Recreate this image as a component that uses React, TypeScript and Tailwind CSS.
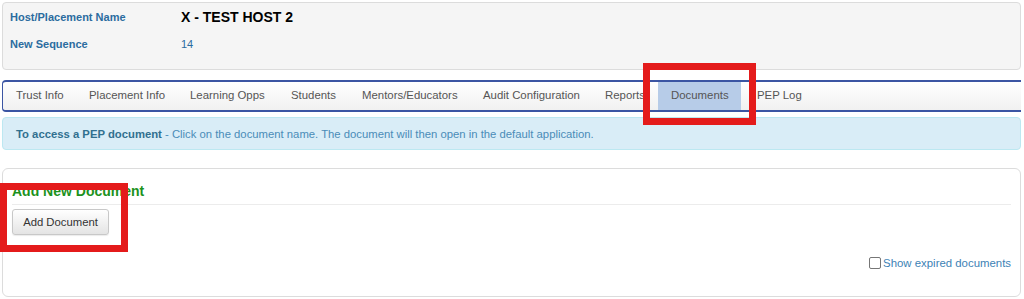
const tabs = [
  { label: 'Trust Info', w: 'w-[73px]' },
  { label: 'Placement Info', w: 'w-[101px]' },
  { label: 'Learning Opps', w: 'w-[101px]' },
  { label: 'Students', w: 'w-[71px]' },
  { label: 'Mentors/Educators', w: 'w-[121px]' },
  { label: 'Audit Configuration', w: 'w-[122px]' },
  { label: 'Reports', w: 'w-[64px]' },
];

export default function App() {
  return (
    <div className="relative h-[299px] w-[1024px] overflow-hidden bg-white pl-[2px] pr-[3px] pt-[2px] font-['Liberation_Sans',Arial,sans-serif]">
      {/* header summary */}
      <div className="h-[68px] rounded-[4px] border border-[#dcdcdc] bg-[#f5f5f5] pl-[7px] pt-[5px]">
        <div className="flex h-[18px] items-center">
          <span className="w-[171px] text-[11px] font-bold text-[#2b6c9f]">Host/Placement Name</span>
          <span className="text-[14px] font-bold text-black">X - TEST HOST 2</span>
        </div>
        <div className="mt-[9px] flex h-[18px] items-center">
          <span className="w-[171px] text-[11px] font-bold text-[#2b6c9f]">New Sequence</span>
          <span className="text-[11px] text-[#2b6c9f]">14</span>
        </div>
      </div>

      {/* tab bar */}
      <div className="mt-[10px] flex h-[32px] rounded-l-[4px] border-y-2 border-l border-[#3b55a3] bg-gradient-to-b from-white to-[#f1f1f1] pl-[2px]">
        {tabs.map((t) => (
          <div key={t.label} className={`${t.w} flex items-center pl-[11px] text-[11.4px] text-[#555]`}>
            {t.label}
          </div>
        ))}
        <div className="flex w-[83px] items-center bg-[#b7cce8] pl-[13px] text-[11.4px] text-[#555]">Documents</div>
        <div className="flex items-center pl-[16px] text-[11.4px] text-[#555]">PEP Log</div>
      </div>

      {/* info alert */}
      <div className="mt-[5px] flex h-[33px] items-center rounded-[4px] border border-[#bce8f1] bg-[#d9edf7] pl-[13px] pt-[1px] text-[11.3px] text-[#4a8cb8]">
        <span className="font-bold text-[#31708f]">To access a PEP document</span>
        <span>&nbsp;- Click on the document name. The document will then open in the default application.</span>
      </div>

      {/* documents panel */}
      <div className="mt-[18px] h-[129px] rounded-[6px] border border-[#dcdcdc] bg-white">
        <div className="mx-[9px] border-b border-[#ececec] pb-[5px] pt-[14px]">
          <h2 className="text-[14px] font-bold leading-[16px] text-[#1c921c]">Add New Document</h2>
        </div>
        <div className="mx-[9px] mt-[4px]">
          <button className="h-[26px] w-[97px] rounded-[3px] border border-[#c8c8c8] bg-gradient-to-b from-white to-[#e4e4e4] text-[11.3px] text-[#333] shadow-[0_1px_1px_rgba(0,0,0,0.08)]">
            Add Document
          </button>
        </div>
        <div className="mt-[21px] flex h-[14px] items-center justify-end pr-[9px]">
          <span className="mr-[2px] h-[12px] w-[12px] rounded-[2px] border border-[#767676] bg-white" />
          <span className="text-[11.4px] text-[#3d82b5]">Show expired documents</span>
        </div>
      </div>

      {/* annotation boxes */}
      <div className="absolute left-[643px] top-[63px] h-[62px] w-[113px] border-[7px] border-[#e41b1b]" />
      <div className="absolute left-[0px] top-[183px] h-[69px] w-[128px] border-[7px] border-[#e41b1b]" />
    </div>
  );
}
